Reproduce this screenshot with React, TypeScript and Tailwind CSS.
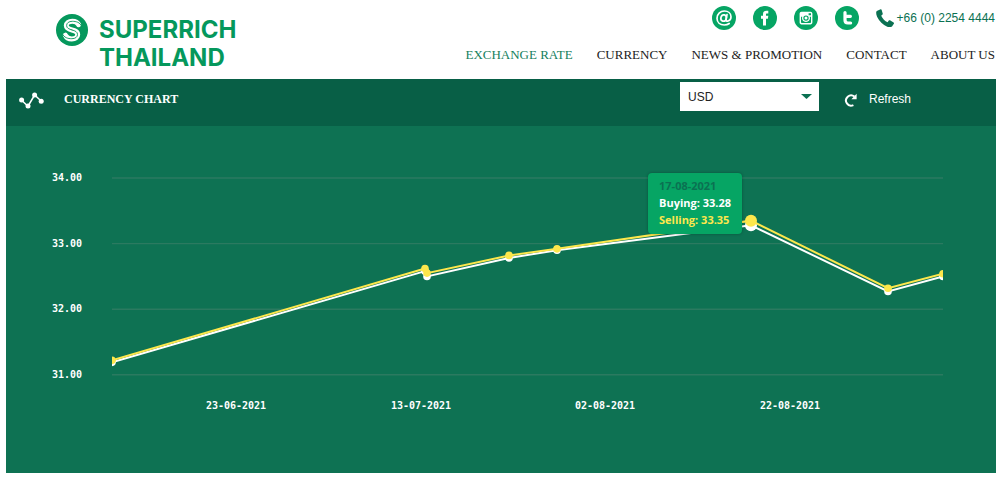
import React from "react";

const SANS = "font-['Liberation_Sans',Arial,sans-serif]";
const SERIF = "font-['Liberation_Serif','Times_New_Roman',serif]";

const NAV = ["EXCHANGE RATE", "CURRENCY", "NEWS & PROMOTION", "CONTACT", "ABOUT US"];

const VIEW_W = 990;
const VIEW_H = 347;
const PLOT_LEFT = 106;
const PLOT_RIGHT = 937;

const yFor = (rate: number) => 52 + (34 - rate) * 65.6;

const RATES = [
  { x: 106, buying: 31.19, selling: 31.22 },
  { x: 419, buying: 32.58, selling: 32.62 },
  { x: 421, buying: 32.5, selling: 32.55 },
  { x: 503, buying: 32.78, selling: 32.82 },
  { x: 551, buying: 32.9, selling: 32.92 },
  { x: 745, buying: 33.28, selling: 33.35 },
  { x: 882, buying: 32.27, selling: 32.32 },
  { x: 937, buying: 32.5, selling: 32.54 },
];
const ACTIVE = 5;

const TICKS = [34, 33, 32, 31];
const DATES = [
  { x: 230, label: "23-06-2021" },
  { x: 415, label: "13-07-2021" },
  { x: 599, label: "02-08-2021" },
  { x: 784, label: "22-08-2021" },
];

function LogoMark() {
  const curve =
    "M22.6 10.6C21.6 8.4 19.4 7.2 16.3 7.2C12.6 7.2 10.3 9 10.3 11.6C10.3 14.4 12.8 15.2 16 16C19.4 16.8 21.7 17.8 21.7 20.5C21.7 23.2 19.4 24.9 15.8 24.9C12.6 24.9 10.4 23.6 9.4 21.2";
  return (
    <svg viewBox="0 0 32 32" className="size-8 shrink-0" aria-hidden="true">
      <circle cx="16" cy="16" r="16" fill="#05985c" />
      <g fill="none" strokeLinecap="round">
        <path d={curve} stroke="#fff" strokeWidth="5" />
        <path
          d="M25.6 12.2C24 8.2 20 7.3 16.4 7.3C12.8 7.3 10.6 9 10.6 11.5C10.6 14.2 13 15.1 16 15.9"
          stroke="#05985c"
          strokeWidth="0.9"
        />
        <path
          d="M16 16C19.4 16.8 21.5 17.9 21.5 20.5C21.5 23.1 19.3 24.7 15.8 24.7C12 24.7 8 23.8 6.4 19.8"
          stroke="#05985c"
          strokeWidth="0.9"
        />
      </g>
    </svg>
  );
}

function Social({ label, children }: { label: string; children: React.ReactNode }) {
  return (
    <a href="#" aria-label={label} className="block size-6">
      <svg viewBox="0 0 24 24" className="size-6" aria-hidden="true">
        <circle cx="12" cy="12" r="12" fill="#06a564" />
        {children}
      </svg>
    </a>
  );
}

function Header() {
  return (
    <header className="flex items-start justify-between pr-[5px] pl-14">
      <a href="#" className="flex gap-[11px] pt-[14px] text-[#05985c]">
        <LogoMark />
        <span className="pt-[2px] font-['Inter',sans-serif] text-2xl leading-7 font-bold">
          SUPERRICH
          <br />
          THAILAND
        </span>
      </a>
      <div className="flex h-[79px] flex-col items-end pt-[6px]">
        <div className="flex items-center gap-[17px]">
          <Social label="Email">
            <g fill="none" stroke="#fff" strokeWidth="1.7" strokeLinecap="round">
              <ellipse cx="11.6" cy="12" rx="2.7" ry="3.2" transform="rotate(15 11.6 12)" />
              <path d="M15 8.6L14.1 13.4C13.9 14.8 14.6 15.3 15.6 15.1C17.6 14.6 19 12.9 19 10.7C19 7.2 16 5 12.4 5C8.2 5 5 8 5 12.2C5 16.4 8.1 19 12.2 19C14.2 19 15.9 18.5 17.2 17.5" />
            </g>
          </Social>
          <Social label="Facebook">
            <path
              fill="#fff"
              d="M10 19.5V12.8H8V9.8H10V8C10 5.8 11.4 4.7 13.5 4.7C14.4 4.7 15 4.8 15.3 4.8V7.5H13.9C13.2 7.5 13 7.9 13 8.5V9.8H15.3L14.9 12.8H13V19.5Z"
            />
          </Social>
          <Social label="Instagram">
            <path
              fill="#fff"
              fillRule="evenodd"
              d="M7.5 5.8H16.5C17.6 5.8 18.4 6.6 18.4 7.7V16.5C18.4 17.6 17.6 18.4 16.5 18.4H7.5C6.4 18.4 5.6 17.6 5.6 16.5V7.7C5.6 6.6 6.4 5.8 7.5 5.8ZM14.6 7.2V9.3H17V7.2ZM7 10.8V16.2C7 16.7 7.3 17 7.8 17H16.2C16.7 17 17 16.7 17 16.2V10.8H15.7C16.7 13.4 14.8 16 12 16C9.2 16 7.3 13.4 8.3 10.8Z"
            />
            <circle cx="12" cy="12.1" r="2.1" fill="none" stroke="#06a564" strokeWidth="1.2" />
          </Social>
          <Social label="Twitter">
            <path
              d="M10 6.6V14.1C10 16 11 17 12.8 17H15.6M10 10.3H15.4"
              fill="none"
              stroke="#fff"
              strokeWidth="3.2"
              strokeLinecap="round"
              strokeLinejoin="round"
            />
          </Social>
          <a href="tel:+6622544444" className={`flex items-center gap-[3px] text-xs text-[#0b7152] ${SANS}`}>
            <svg viewBox="3 3 18 18" className="size-[18px]" fill="#0b7152" aria-hidden="true">
              <path d="M7.6 3.2L3.8 4.9C2.8 5.6 3 8.4 4.2 11C6.2 15.3 9.9 19 14.3 20.7C16.2 21.3 18.3 21.2 19 20.5L21 17.6C21.2 17.2 21 16.7 20.6 16.4L17 14.3C16.6 14.1 16.1 14.2 15.8 14.6L14.6 16.3C12 15.2 9.5 12.6 8.2 9.7L9.5 8.6C9.8 8.3 9.9 7.9 9.7 7.5L8.6 3.7C8.5 3.3 8 3 7.6 3.2Z" />
            </svg>
            +66 (0) 2254 4444
          </a>
        </div>
        <nav className={`flex gap-6 pt-4 text-[13px] leading-[18px] text-[#222] ${SERIF}`}>
          {NAV.map((item, i) => (
            <a key={item} href="#" className={i === 0 ? "text-[#16805d]" : ""}>
              {item}
            </a>
          ))}
        </nav>
      </div>
    </header>
  );
}

function Toolbar() {
  return (
    <div className={`flex h-[47px] items-start bg-[#085f46] pr-[85px] pl-[13px] text-xs text-white ${SANS}`}>
      <svg viewBox="0 0 25 17" className="mt-[13px] h-[17px] w-[25px]" fill="#fff" aria-hidden="true">
        <path d="M2.6 8.2L9 14.2L15.6 3L22.4 9.2" fill="none" stroke="#fff" strokeWidth="1.5" />
        <circle cx="2.6" cy="8" r="2.5" />
        <circle cx="9" cy="14" r="2.5" />
        <circle cx="15.6" cy="3" r="2.5" />
        <circle cx="22.2" cy="9.2" r="2.5" />
      </svg>
      <h1 className={`mt-[11px] ml-5 flex-1 text-xs leading-[18px] font-bold ${SERIF}`}>CURRENCY CHART</h1>
      <div className="relative mt-[3px] w-[139px]">
        <select
          aria-label="Currency"
          defaultValue="USD"
          className="h-[29px] w-full appearance-none bg-white pl-2 text-xs text-[#222]"
        >
          <option>USD</option>
          <option>EUR</option>
          <option>JPY</option>
        </select>
        <svg
          viewBox="0 0 11 5"
          className="pointer-events-none absolute top-3 right-[7px] h-[5px] w-[11px]"
          fill="#0b7152"
          aria-hidden="true"
        >
          <path d="M0 0H11L5.5 5Z" />
        </svg>
      </div>
      <button type="button" className="mt-[10px] ml-[25px] flex h-5 items-center gap-3">
        <svg viewBox="0 0 13 14" className="mt-[2px] h-[14px] w-[13px]" aria-hidden="true">
          <path d="M10.4 3.6A5.1 5.1 0 1 0 9.4 12.1" fill="none" stroke="#fff" strokeWidth="2" />
          <path d="M12.6 0.8V6.2H7.4Z" fill="#fff" />
        </svg>
        Refresh
      </button>
    </div>
  );
}

function Series({ field, color }: { field: "buying" | "selling"; color: string }) {
  return (
    <g fill={color} stroke="none">
      <polyline
        points={RATES.map((r) => `${r.x},${yFor(r[field])}`).join(" ")}
        fill="none"
        stroke={color}
        strokeWidth="2"
      />
      {RATES.map((r, i) => (
        <circle key={r.x} cx={r.x} cy={yFor(r[field])} r={i === ACTIVE ? 6 : 3.8} />
      ))}
    </g>
  );
}

function RateChart() {
  const active = RATES[ACTIVE];
  return (
    <div className="relative">
      <svg
        viewBox={`0 0 ${VIEW_W} ${VIEW_H}`}
        className="block h-auto w-full font-['DejaVu_Sans_Mono',monospace] text-[10px] font-bold"
        role="img"
        aria-label="Currency chart"
      >
        <defs>
          <clipPath id="plot">
            <rect x={PLOT_LEFT} y="0" width={PLOT_RIGHT - PLOT_LEFT} height={VIEW_H} />
          </clipPath>
        </defs>
        {TICKS.map((t) => (
          <g key={t}>
            <line x1={PLOT_LEFT} x2={PLOT_RIGHT} y1={yFor(t)} y2={yFor(t)} stroke="#2b7a60" strokeWidth="1.4" />
            <text x="76" y={yFor(t) + 3} textAnchor="end" fill="#fff">
              {t.toFixed(2)}
            </text>
          </g>
        ))}
        {DATES.map((d) => (
          <text key={d.label} x={d.x} y="283" textAnchor="middle" fill="#fff">
            {d.label}
          </text>
        ))}
        <g clipPath="url(#plot)">
          <Series field="buying" color="#ffffff" />
          <Series field="selling" color="#fde74c" />
        </g>
      </svg>
      <div
        className="absolute rounded-[4px] bg-[#06a564] px-[11px] pt-1 pb-[6px] font-['Open_Sans',sans-serif] text-[11px] leading-[17px] font-bold whitespace-nowrap text-white shadow-[0_0_3px_rgba(0,0,0,0.3)]"
        style={{
          right: `${((VIEW_W - active.x + 9) / VIEW_W) * 100}%`,
          top: `${((yFor(active.buying) - 52) / VIEW_H) * 100}%`,
        }}
      >
        <div className="text-[#0b7152]">17-08-2021</div>
        <div>Buying: {active.buying.toFixed(2)}</div>
        <div className="text-[#fde74c]">Selling: {active.selling.toFixed(2)}</div>
      </div>
    </div>
  );
}

export default function App() {
  return (
    <div className="min-h-screen bg-white">
      <Header />
      <main className="mr-1 ml-[6px] bg-[#0e7253]">
        <Toolbar />
        <RateChart />
      </main>
    </div>
  );
}
